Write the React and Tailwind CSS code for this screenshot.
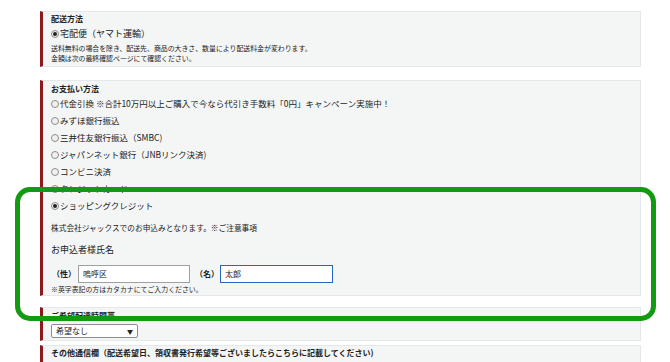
const font = { fontFamily: '"Noto Sans CJK JP", "Noto Sans", sans-serif' };

const Radio = ({ checked }) => (
    <span className="inline-flex items-center justify-center w-[8px] h-[8px] rounded-full border border-[#8d8d8d] bg-[#f0f0f0] mr-[1px] shrink-0">
        {checked && <span className="w-[4px] h-[4px] rounded-full bg-[#222]" />}
    </span>
);

const RadioRow = ({ label, checked }) => (
    <div className="h-[17px] flex items-center text-[8.5px] text-[#222] whitespace-nowrap">
        <Radio checked={checked} />
        <span>{label}</span>
    </div>
);

const Box = ({ children, className = "" }) => (
    <div className={"bg-[#f4f6f6] border border-[#e4e8ec] border-l-[3px] border-l-[#8b1a1f] pl-[8px] " + className}>
        {children}
    </div>
);

const payments = [
    "代金引換 ※合計10万円以上ご購入で今なら代引き手数料「0円」キャンペーン実施中！",
    "みずほ銀行振込",
    "三井住友銀行振込（SMBC)",
    "ジャパンネット銀行（JNBリンク決済)",
    "コンビニ決済",
    "クレジットカード",
];

export default function App() {
    return (
        <div className="relative w-[670px] h-[362px] bg-white overflow-hidden" style={font}>
            <div className="flex flex-col ml-[40px] pt-[11px] w-[601px]">
                <Box className="pt-[1px] pb-[3px]">
                    <div className="h-[12px] flex items-center text-[8px] font-bold text-[#222]">配送方法</div>
                    <div className="h-[12px] mt-[3px] flex items-center text-[9px] text-[#222]">
                        <Radio checked />
                        <span>宅配便（ヤマト運輸）</span>
                    </div>
                    <div className="mt-[4px] text-[6.9px] leading-[9.5px] text-[#222]">
                        <p>送料無料の場合を除き、配送先、商品の大きさ、数量により配送料金が変わります。</p>
                        <p>金額は次の最終確認ページにて確認ください。</p>
                    </div>
                </Box>

                <Box className="mt-[13px] pt-[2px] pb-[1px]">
                    <div className="h-[12px] flex items-center text-[8px] font-bold text-[#222]">お支払い方法</div>
                    {payments.map((p) => (
                        <RadioRow key={p} label={p} />
                    ))}
                    <RadioRow label="ショッピングクレジット" checked />
                    <div className="h-[12px] mt-[8px] flex items-center text-[7.7px] text-[#222]">
                        株式会社ジャックスでのお申込みとなります。※ご注意事項
                    </div>
                    <div className="h-[14px] mt-[9px] flex items-center text-[9px] text-[#222]">お申込者様氏名</div>
                    <div className="h-[18px] mt-[8px] flex items-center text-[8px] text-[#222]">
                        <span className="w-[27px] pl-[1px] font-bold">（性）</span>
                        <div className="w-[112px] h-[18px] bg-white border border-[#a0a0a0] flex items-center px-[4px]">嗚呼区</div>
                        <span className="w-[30px] pl-[5px] font-bold">（名）</span>
                        <div className="w-[113px] h-[18px] bg-white border border-[#2a62c9] flex items-center px-[4px]">太郎</div>
                    </div>
                    <div className="h-[10px] mt-[1px] flex items-center text-[6.9px] text-[#222]">
                        ※英字表記の方はカタカナにてご入力ください。
                    </div>
                </Box>

                <Box className="mt-[11px] pt-[2px] pb-[2px]">
                    <div className="h-[12px] flex items-center text-[8px] font-bold text-[#222]">ご希望配達時間帯</div>
                    <div className="mt-[2px] w-[87px] h-[14px] bg-white border border-[#8d8d8d] rounded-[2px] flex items-center justify-between px-[4px] text-[8px] text-[#222]">
                        <span>希望なし</span>
                        <span className="text-[6px]">▼</span>
                    </div>
                </Box>

                <Box className="mt-[4px] pt-[1px] pb-[6px]">
                    <div className="h-[12px] flex items-center text-[8px] font-bold text-[#222] whitespace-nowrap">
                        その他通信欄（配送希望日、領収書発行希望等ございましたらこちらに記載してください)
                    </div>
                </Box>
            </div>

            <div className="absolute left-[15px] top-[187px] w-[641px] h-[134px] border-[5px] border-[#129b12] rounded-[15px] pointer-events-none" />
        </div>
    );
}
